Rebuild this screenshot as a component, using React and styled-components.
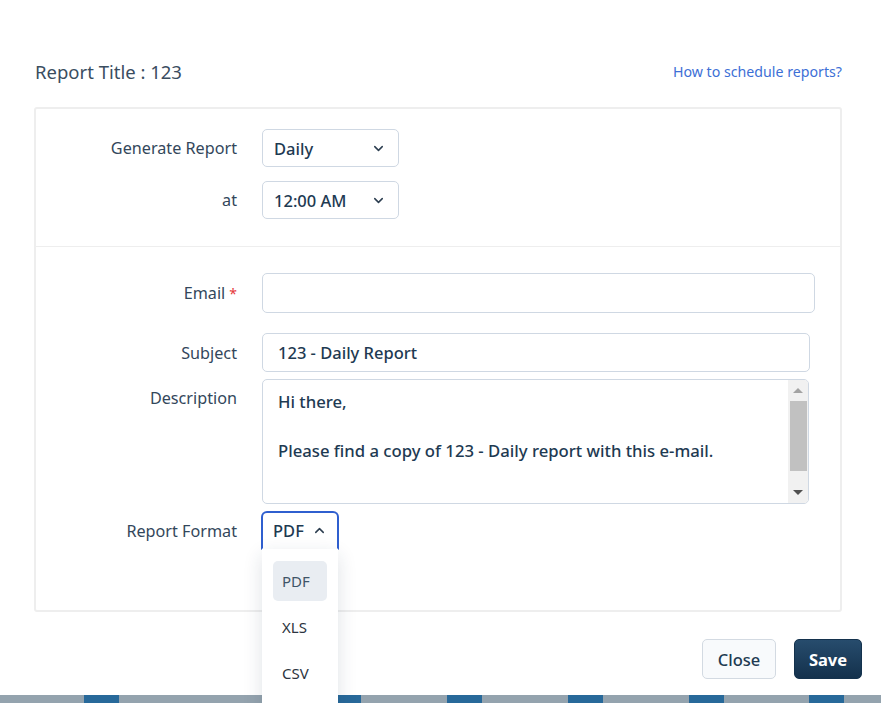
import React from 'react';
import styled, { createGlobalStyle } from 'styled-components';
import { ChevronDown, ChevronUp } from 'lucide-react';

const GlobalStyle = createGlobalStyle`
  html, body {
    margin: 0;
    padding: 0;
    background: #ffffff;
  }
  body {
    font-family: "Noto Sans", "Open Sans", sans-serif;
    color: #33475b;
  }
  * {
    box-sizing: border-box;
  }
`;

const Page = styled.div`
  width: 881px;
  height: 703px;
  overflow: hidden;
  display: flex;
  flex-direction: column;
  position: relative;
`;

const Modal = styled.div`
  height: 695px;
  background: #ffffff;
  border-bottom-right-radius: 5px;
  padding: 56px 19px 0 34px;
  display: flex;
  flex-direction: column;
`;

const Header = styled.div`
  display: flex;
  justify-content: space-between;
  align-items: center;
  height: 30px;
  padding-right: 20px;
`;

const Title = styled.h4`
  margin: 0;
  font-size: 18.5px;
  font-weight: 400;
  color: #3a4d5f;
  padding-left: 1px;
`;

const HelpLink = styled.a`
  font-size: 14.2px;
  color: #3d6fd6;
  text-decoration: none;
  cursor: pointer;
`;

const Card = styled.div`
  margin-top: 21px;
  width: 808px;
  border: 2px solid #eeeeee;
  border-radius: 3px;
`;

const Section = styled.div`
  padding: ${(p) => p.$pad};
  display: flex;
  flex-direction: column;
  gap: ${(p) => p.$gap || '14px'};
  & + & {
    border-top: 1px solid #eeeeee;
  }
`;

const Row = styled.div`
  display: grid;
  grid-template-columns: 201px 1fr;
  column-gap: 25px;
  align-items: ${(p) => (p.$top ? 'start' : 'center')};
  margin-top: ${(p) => p.$mt || '0'};
`;

const Label = styled.label`
  text-align: right;
  font-size: 16.2px;
  color: #33475b;
  padding-top: ${(p) => (p.$top ? '8px' : '0')};
`;

const Required = styled.span`
  color: #e5383b;
  margin-left: 4px;
  font-size: 14px;
`;

const SelectBox = styled.div`
  position: relative;
  width: ${(p) => p.$w};
  height: 38px;
  border: 1px solid #cfd8e3;
  border-radius: 5px;
  display: flex;
  align-items: center;
  justify-content: space-between;
  padding: 0 12px 0 11px;
  font-size: 16.5px;
  font-weight: 500;
  color: #1e3a52;
  background: #ffffff;
`;

const OpenSelect = styled(SelectBox)`
  height: 39px;
  border: 2px solid #2f5fcf;
  border-bottom-color: transparent;
  border-radius: 6px 6px 0 0;
  padding: 0 10px 0 10px;
  margin-left: -1px;
`;

const Menu = styled.div`
  position: absolute;
  top: 36px;
  left: -1px;
  width: 76px;
  height: 170px;
  background: #ffffff;
  box-shadow: 0 6px 18px rgba(30, 50, 80, 0.14);
  padding: 12px 11px;
  display: flex;
  flex-direction: column;
  gap: 6px;
  z-index: 10;
`;

const MenuItem = styled.div`
  height: 40px;
  border-radius: 5px;
  display: flex;
  align-items: center;
  padding-left: 9px;
  font-size: 15px;
  font-weight: 400;
  color: ${(p) => (p.$active ? '#3f5468' : '#2c3440')};
  background: ${(p) => (p.$active ? '#e9edf2' : 'transparent')};
`;

const TextInput = styled.div`
  width: ${(p) => p.$w};
  height: ${(p) => p.$h || '40px'};
  border: 1px solid #cfd8e3;
  border-radius: 5px;
  display: flex;
  align-items: center;
  padding: 0 15px;
  font-size: 16.5px;
  font-weight: 500;
  color: #1e3a52;
`;

const TextArea = styled.div`
  position: relative;
  width: 547px;
  height: 125px;
  border: 1px solid #cfd8e3;
  border-radius: 5px;
  padding: 10px 40px 0 15px;
  font-size: 16.7px;
  font-weight: 500;
  line-height: 24.5px;
  color: #1e3a52;
  overflow: hidden;
`;

const Line = styled.div`
  min-height: 24.5px;
`;

const Scrollbar = styled.div`
  position: absolute;
  top: 0;
  right: 0;
  bottom: 0;
  width: 20px;
  background: #f1f1f1;
  display: flex;
  flex-direction: column;
  align-items: center;
  padding: 4px 2px;
`;

const Arrow = styled.div`
  width: 0;
  height: 0;
  border-left: 5px solid transparent;
  border-right: 5px solid transparent;
  ${(p) =>
    p.$up
      ? 'border-bottom: 5px solid #a3a3a3; margin-top: 4px;'
      : 'border-top: 5px solid #505050; margin-bottom: 4px;'}
`;

const Thumb = styled.div`
  width: 17px;
  height: 70px;
  background: #c1c1c1;
  margin-top: 8px;
  flex: none;
`;

const Spacer = styled.div`
  flex: 1;
`;

const Footer = styled.div`
  display: flex;
  justify-content: flex-end;
  gap: 18px;
  margin-top: 27px;
`;

const Button = styled.button`
  height: 40px;
  width: ${(p) => (p.$primary ? '68px' : '74px')};
  padding: 0;
  border-radius: 5px;
  font-family: inherit;
  font-size: 16.5px;
  font-weight: ${(p) => (p.$primary ? 700 : 500)};
  border: 1px solid ${(p) => (p.$primary ? '#14324d' : '#d3dae2')};
  background: ${(p) =>
    p.$primary ? 'linear-gradient(#274c6d, #14314c)' : '#f8fafc'};
  color: ${(p) => (p.$primary ? '#ffffff' : '#1e3a52')};
`;

const Strip = styled.div`
  height: 8px;
  display: flex;
  background: #94a3ae;
`;

const Segment = styled.div`
  flex: none;
  height: 100%;
  background: ${(p) => (p.$blue ? '#28699a' : 'transparent')};
`;

const segments = [
  [84, false], [35, true], [207, false], [35, true], [86, false], [35, true],
  [86, false], [35, true], [86, false], [35, true], [85, false], [35, true],
  [37, false],
];

export default function App() {
  return (
    <>
      <GlobalStyle />
      <Page>
        <Modal>
          <Header>
            <Title>Report Title : 123</Title>
            <HelpLink>How to schedule reports?</HelpLink>
          </Header>
          <Card>
            <Section $pad="20px 0 27px 0" $gap="14px">
              <Row>
                <Label>Generate Report</Label>
                <SelectBox $w="137px">
                  Daily
                  <ChevronDown size={15} strokeWidth={2.4} color="#2c3e50" />
                </SelectBox>
              </Row>
              <Row>
                <Label>at</Label>
                <SelectBox $w="137px">
                  12:00 AM
                  <ChevronDown size={15} strokeWidth={2.4} color="#2c3e50" />
                </SelectBox>
              </Row>
            </Section>
            <Section $pad="26px 0 60px 0" $gap="7px">
              <Row>
                <Label>
                  Email<Required>*</Required>
                </Label>
                <TextInput $w="553px" />
              </Row>
              <Row $mt="13px">
                <Label>Subject</Label>
                <TextInput $w="548px" $h="39px">123 - Daily Report</TextInput>
              </Row>
              <Row $top>
                <Label $top>Description</Label>
                <TextArea>
                  <Line>Hi there,</Line>
                  <Line />
                  <Line>Please find a copy of 123 - Daily report with this e-mail.</Line>
                  <Scrollbar>
                    <Arrow $up />
                    <Thumb />
                    <Spacer />
                    <Arrow />
                  </Scrollbar>
                </TextArea>
              </Row>
              <Row>
                <Label>Report Format</Label>
                <OpenSelect $w="78px">
                  PDF
                  <ChevronUp size={15} strokeWidth={2.4} color="#2c3e50" />
                  <Menu>
                    <MenuItem $active>PDF</MenuItem>
                    <MenuItem>XLS</MenuItem>
                    <MenuItem>CSV</MenuItem>
                  </Menu>
                </OpenSelect>
              </Row>
            </Section>
          </Card>
          <Footer>
            <Button>Close</Button>
            <Button $primary>Save</Button>
          </Footer>
        </Modal>
        <Strip>
          {segments.map(([w, blue], i) => (
            <Segment key={i} $blue={blue} style={{ width: w }} />
          ))}
        </Strip>
      </Page>
    </>
  );
}
